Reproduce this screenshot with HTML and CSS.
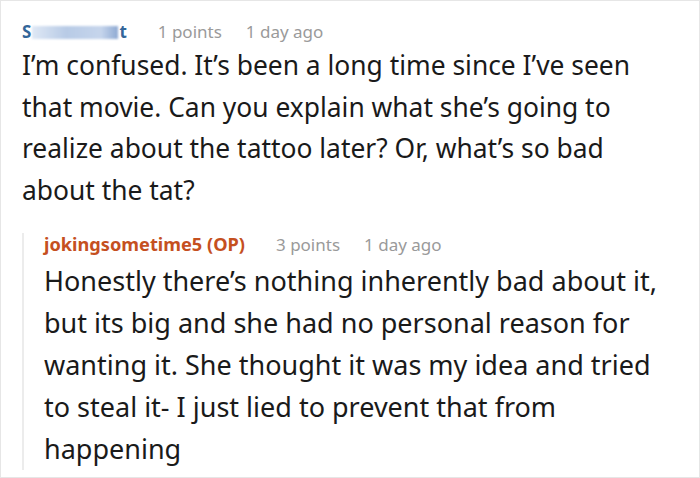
FILE: index.html
```html
<!DOCTYPE html>
<html>
<head>
<meta charset="utf-8">
<link rel="stylesheet" href="styles.css">
</head>
<body>
<div class="frame">
  <div class="comment">
    <div class="meta">
      <span class="author"><span>S</span><span class="blur"></span><span>t</span></span>
      <span class="info">1 points</span>
      <span class="info">1 day ago</span>
    </div>
    <p class="body">I’m confused. It’s been a long time since I’ve seen that movie. Can you explain what she’s going to realize about the tattoo later? Or, what’s so bad about the tat?</p>
    <div class="reply">
      <div class="meta">
        <span class="author op">jokingsometime5 (OP)</span>
        <span class="info">3 points</span>
        <span class="info">1 day ago</span>
      </div>
      <p class="body">Honestly there’s nothing inherently bad about it, but its big and she had no personal reason for wanting it. She thought it was my idea and tried to steal it- I just lied to prevent that from happening</p>
    </div>
  </div>
</div>
</body>
</html>
```
FILE: styles.css
```css
html, body {
  margin: 0;
  padding: 0;
  background: #fff;
}
.frame {
  width: 700px;
  height: 478px;
  box-sizing: border-box;
  border: 1px solid #e6e6e6;
  overflow: hidden;
  font-family: "Noto Sans", "Open Sans", sans-serif;
}
.comment {
  padding: 20px 0 0 21px;
}
.meta {
  display: flex;
  align-items: baseline;
  gap: 24px;
  font-size: 17px;
  line-height: 22px;
}
.author {
  color: #336699;
  font-weight: 700;
  display: inline-flex;
  align-items: center;
  margin-right: 7px;
}
.blur {
  display: inline-block;
  width: 86px;
  height: 13px;
  margin: 0 1px;
  background: linear-gradient(90deg, #dfe8f5, #b8cbe6 40%, #c6d5ec 80%, #8faad3);
  filter: blur(1px);
}
.info {
  color: #9a9a9a;
}
.body {
  margin: 2px 0 0;
  font-size: 26.4px;
  line-height: 41.6px;
  color: #1a1a1a;
  width: 645px;
}
.reply {
  margin-top: 22px;
  border-left: 2px solid #ececec;
  padding-left: 20px;
  width: 632px;
}
.op {
  color: #c5501f;
  font-size: 18.2px;
}
.reply .body {
  margin: 4px 0 -9px;
  font-size: 27px;
  line-height: 42px;
  width: 632px;
}
```
